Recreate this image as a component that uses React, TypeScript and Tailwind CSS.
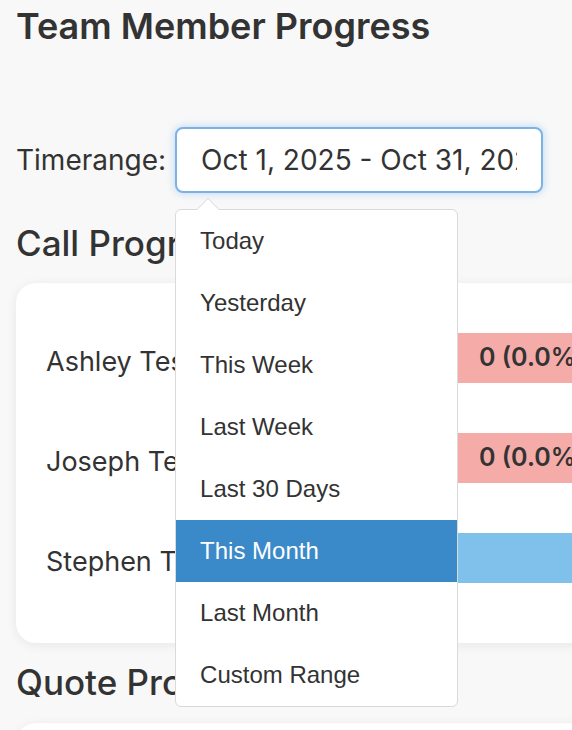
import React from "react";

const ranges = ["Today", "Yesterday", "This Week", "Last Week", "Last 30 Days", "This Month", "Last Month", "Custom Range"];

const calls = [
  { name: "Ashley Test", label: "0 (0.0%)", tone: "bg-[#f5aca8]" },
  { name: "Joseph Test", label: "0 (0.0%)", tone: "bg-[#f5aca8]" },
  { name: "Stephen Test", label: "", tone: "bg-[#7fc1ea]" },
];

function RangePicker() {
  return (
    <div className="relative">
      <input
        readOnly
        value="Oct 1, 2025 - Oct 31, 2025"
        className="block w-[368px] h-[66px] rounded-[8px] border-2 border-[#7db2e6] bg-white px-[24px] text-[28px] text-[#333] outline-none shadow-[0_0_9px_rgba(102,170,233,0.45)]"
      />
      <div className="absolute left-0 top-[82px] z-10 w-[283px] rounded-[6px] border border-[#dadada] bg-white">
        <div className="absolute left-[20px] top-[-12px] h-0 w-0 border-x-[12px] border-b-[12px] border-x-transparent border-b-[#d6d6d6]" />
        <div className="absolute left-[21px] top-[-11px] h-0 w-0 border-x-[11px] border-b-[11px] border-x-transparent border-b-white" />
        <ul className="font-['Liberation_Sans',Arial,sans-serif] text-[24px]">
          {ranges.map((r) => (
            <li
              key={r}
              className={`flex h-[62px] items-center px-[24px] ${r === "This Month" ? "bg-[#3a89c9] text-white" : "text-[#333]"}`}
            >
              {r}
            </li>
          ))}
        </ul>
      </div>
    </div>
  );
}

export default function App() {
  return (
    <div className="h-[730px] w-[572px] overflow-hidden bg-[#f8f8f8] font-['Inter',sans-serif] text-[#333]">
      <div className="px-[16px]">
        <h1 className="pt-[5px] text-[36px] font-semibold leading-[1.2]">Team Member Progress</h1>

        <div className="mt-[79px] flex items-center">
          <label className="mr-[9px] text-[28px]">Timerange:</label>
          <RangePicker />
        </div>

        <h2 className="mt-[29px] text-[35px] font-medium leading-[1.2]">Call Progress</h2>
        <div className="mt-[19px] w-[700px] rounded-[20px] bg-white pt-[25px] pb-[35px] shadow-[0_2px_12px_rgba(0,0,0,0.07)]">
          {calls.map((c) => (
            <div key={c.name} className="flex h-[100px] items-center">
              <div className="w-[442px] pl-[30px] pt-[8px] text-[27px]">{c.name}</div>
              <div className={`flex h-[50px] flex-1 items-center pl-[21px] text-[25px] font-semibold ${c.tone}`}>{c.label}</div>
            </div>
          ))}
        </div>

        <h2 className="mt-[18px] text-[35px] font-medium leading-[1.2]">Quote Progress</h2>
        <div className="mt-[20px] h-[200px] w-[700px] rounded-[20px] bg-white shadow-[0_2px_12px_rgba(0,0,0,0.07)]" />
      </div>
    </div>
  );
}
